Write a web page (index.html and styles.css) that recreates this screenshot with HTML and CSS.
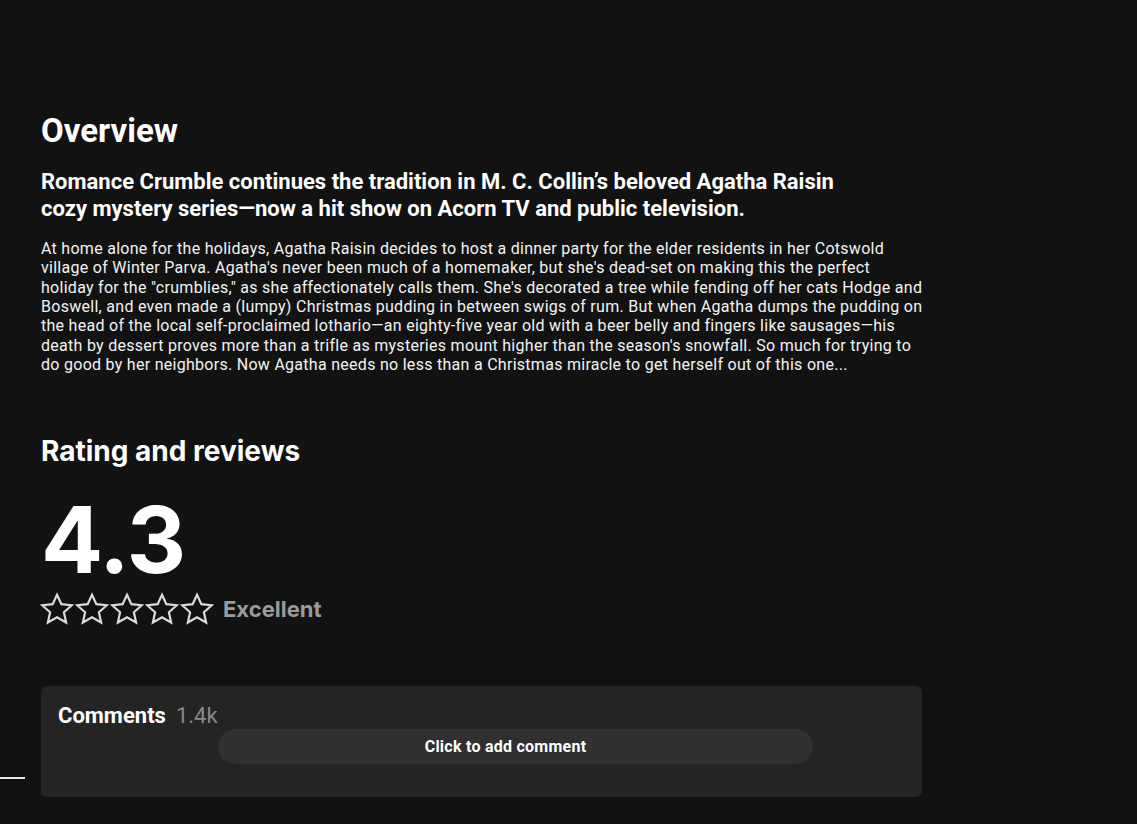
FILE: index.html
```html
<!DOCTYPE html>
<html lang="en">
<head>
<meta charset="utf-8">
<title>Overview</title>
<link rel="stylesheet" href="styles.css">
</head>
<body>
<div class="edge-line"></div>
<main class="page">
  <section class="overview">
    <h1 class="section-title">Overview</h1>
    <h2 class="tagline">Romance Crumble continues the tradition in M. C. Collin’s beloved Agatha Raisin cozy mystery series—now a hit show on Acorn TV and public television.</h2>
    <p class="summary">At home alone for the holidays, Agatha Raisin decides to host a dinner party for the elder residents in her Cotswold village of Winter Parva. Agatha's never been much of a homemaker, but she's dead-set on making this the perfect holiday for the "crumblies," as she affectionately calls them. She's decorated a tree while fending off her cats Hodge and Boswell, and even made a (lumpy) Christmas pudding in between swigs of rum. But when Agatha dumps the pudding on the head of the local self-proclaimed lothario—an eighty-five year old with a beer belly and fingers like sausages—his death by dessert proves more than a trifle as mysteries mount higher than the season's snowfall. So much for trying to do good by her neighbors. Now Agatha needs no less than a Christmas miracle to get herself out of this one...</p>
  </section>
  <section class="rating">
    <h2 class="rating-title">Rating and reviews</h2>
    <div class="score">4.3</div>
    <div class="stars-row">
      <div class="stars">
        <svg class="star" viewBox="0 0 24 24"><path d="M12 2.5l2.9 6.3 6.9.7-5.2 4.7 1.5 6.8L12 17.5 5.9 21l1.5-6.8L2.2 9.5l6.9-.7z"/></svg>
        <svg class="star" viewBox="0 0 24 24"><path d="M12 2.5l2.9 6.3 6.9.7-5.2 4.7 1.5 6.8L12 17.5 5.9 21l1.5-6.8L2.2 9.5l6.9-.7z"/></svg>
        <svg class="star" viewBox="0 0 24 24"><path d="M12 2.5l2.9 6.3 6.9.7-5.2 4.7 1.5 6.8L12 17.5 5.9 21l1.5-6.8L2.2 9.5l6.9-.7z"/></svg>
        <svg class="star" viewBox="0 0 24 24"><path d="M12 2.5l2.9 6.3 6.9.7-5.2 4.7 1.5 6.8L12 17.5 5.9 21l1.5-6.8L2.2 9.5l6.9-.7z"/></svg>
        <svg class="star" viewBox="0 0 24 24"><path d="M12 2.5l2.9 6.3 6.9.7-5.2 4.7 1.5 6.8L12 17.5 5.9 21l1.5-6.8L2.2 9.5l6.9-.7z"/></svg>
      </div>
      <span class="rating-label">Excellent</span>
    </div>
  </section>
  <section class="comments">
    <div class="comments-head">
      <span class="comments-title">Comments</span>
      <span class="comments-count">1.4k</span>
    </div>
    <button class="add-comment">Click to add comment</button>
  </section>
</main>
</body>
</html>
```

FILE: styles.css
```css
* { box-sizing: border-box; }
html, body {
  margin: 0;
  padding: 0;
  background: #121212;
  color: #ffffff;
  font-family: Roboto, "Liberation Sans", sans-serif;
  height: 100%;
  overflow: hidden;
}
.edge-line {
  position: absolute;
  left: 0;
  top: 777px;
  width: 25px;
  height: 2px;
  background: #e8e8e8;
}
.page {
  padding: 112px 0 0 41px;
  width: 922px;
}
.section-title {
  margin: 0;
  font-size: 33px;
  line-height: 38px;
  font-weight: 700;
}
.tagline {
  margin: 18px 0 0;
  font-size: 22px;
  line-height: 27px;
  font-weight: 700;
  max-width: 820px;
}
.summary {
  margin: 17px 0 0;
  width: calc(100% + 2px);
  font-size: 16px;
  line-height: 19.33px;
  letter-spacing: 0.28px;
  font-weight: 400;
  color: #f2f2f2;
}
.rating {
  margin-top: 60px;
}
.rating-title {
  margin: 0;
  font-family: Inter, "Liberation Sans", sans-serif;
  font-size: 28px;
  line-height: 34px;
  font-weight: 700;
}
.score {
  margin-top: 26px;
  font-family: Inter, "Liberation Sans", sans-serif;
  font-size: 92px;
  line-height: 92px;
  font-weight: 700;
  letter-spacing: -1px;
}
.stars-row {
  display: flex;
  align-items: center;
  gap: 9px;
  margin-top: 5px;
}
.stars {
  display: flex;
  margin-left: -2px;
}
.star {
  width: 36px;
  height: 36px;
  margin-right: -1px;
  fill: none;
  stroke: #dcdcdc;
  stroke-width: 1.45;
  stroke-linejoin: miter;
}
.rating-label {
  font-family: Inter, "Liberation Sans", sans-serif;
  font-size: 22px;
  font-weight: 700;
  color: #9b9b9b;
}
.comments {
  margin-top: 59px;
  background: #242424;
  border-radius: 6px;
  height: 111px;
  padding: 16px 17px;
}
.comments-head {
  display: flex;
  align-items: baseline;
  gap: 10px;
}
.comments-title {
  font-size: 22px;
  font-weight: 700;
  line-height: 28px;
}
.comments-count {
  font-size: 22px;
  color: #8a8a8a;
  line-height: 28px;
}
.add-comment {
  display: block;
  margin: -1px 0 0 160px;
  width: 595px;
  height: 35px;
  border: none;
  border-radius: 18px;
  background: #303030;
  color: #ffffff;
  font-family: Roboto, "Liberation Sans", sans-serif;
  font-size: 16px;
  letter-spacing: 0.25px;
  font-weight: 700;
  padding: 0 20px 0 0;
  cursor: pointer;
}
```
